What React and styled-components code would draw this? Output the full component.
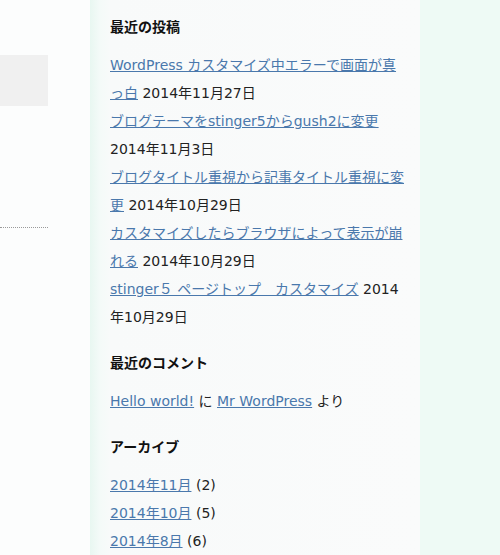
import React from 'react';
import styled, { createGlobalStyle } from 'styled-components';

const GlobalStyle = createGlobalStyle`
  body {
    margin: 0;
    background: #eefaf5;
    font-family: "DejaVu Sans", "Noto Sans CJK JP", sans-serif;
    font-size: 14px;
    color: #222;
  }
`;

const Page = styled.div`
  display: flex;
  height: 555px;
  overflow: hidden;
`;

const MainEdge = styled.div`
  width: 90px;
  flex-shrink: 0;
  background: #fcfdfd;
  padding-top: 55px;
  box-sizing: border-box;
`;

const GreyBox = styled.div`
  width: 48px;
  height: 51px;
  background: #f0f0f0;
`;

const Dotted = styled.div`
  width: 48px;
  margin-top: 121px;
  border-top: 1px dotted #9a9a9a;
`;

const Sidebar = styled.aside`
  width: 330px;
  flex-shrink: 0;
  box-sizing: border-box;
  padding: 13px 0 0 20px;
  background: linear-gradient(to right, #e8f7f1 0px, #f4faf8 10px, #f8fafa 20px, #fafbfb 100%);
`;

const Widget = styled.section`
  margin-bottom: 18px;
`;

const Heading = styled.h4`
  margin: 0 0 10px;
  font-size: 14px;
  font-weight: bold;
  line-height: 28px;
  color: #111;
`;

const List = styled.ul`
  margin: 0;
  padding: 0;
  list-style: none;
  width: 296px;
  line-break: loose;
`;

const Item = styled.li`
  line-height: 28px;
`;

const Link = styled.a`
  color: #4a78ac;
  text-decoration: underline;
`;

const posts = [
  { title: 'WordPress カスタマイズ中エラーで画面が真っ白', date: '2014年11月27日' },
  { title: 'ブログテーマをstinger5からgush2に変更', date: '2014年11月3日' },
  { title: 'ブログタイトル重視から記事タイトル重視に変更', date: '2014年10月29日' },
  { title: 'カスタマイズしたらブラウザによって表示が崩れる', date: '2014年10月29日' },
  { title: 'stinger５ ページトップ　カスタマイズ', date: '2014年10月29日' },
];

const archives = [
  { month: '2014年11月', count: 2 },
  { month: '2014年10月', count: 5 },
  { month: '2014年8月', count: 6 },
];

export default function App() {
  return (
    <Page>
      <GlobalStyle />
      <MainEdge>
        <GreyBox />
        <Dotted />
      </MainEdge>
      <Sidebar>
        <Widget>
          <Heading>最近の投稿</Heading>
          <List>
            {posts.map((p) => (
              <Item key={p.title}>
                <Link href="#">{p.title}</Link> {p.date}
              </Item>
            ))}
          </List>
        </Widget>
        <Widget>
          <Heading>最近のコメント</Heading>
          <List>
            <Item>
              <Link href="#">Hello world!</Link> に <Link href="#">Mr WordPress</Link> より
            </Item>
          </List>
        </Widget>
        <Widget>
          <Heading>アーカイブ</Heading>
          <List>
            {archives.map((a) => (
              <Item key={a.month}>
                <Link href="#">{a.month}</Link> ({a.count})
              </Item>
            ))}
          </List>
        </Widget>
      </Sidebar>
    </Page>
  );
}
